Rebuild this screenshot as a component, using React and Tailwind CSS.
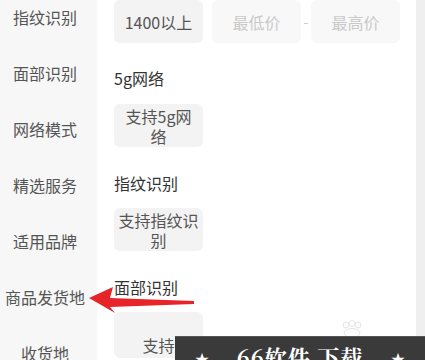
import React from 'react';

const sideItems = ['指纹识别', '面部识别', '网络模式', '精选服务', '适用品牌', '商品发货地', '收货地'];

const Chip = ({ children, className = '' }) => (
  <div
    className={`w-[89px] h-[43px] shrink-0 rounded-[6px] bg-[#f3f3f3] px-[4px] flex items-center justify-center text-center text-[16px] leading-[20px] text-[#555] ${className}`}
  >
    {children}
  </div>
);

const Heading = ({ children, className = '' }) => (
  <div className={`text-[16px] leading-[20px] text-[#333] ${className}`}>{children}</div>
);

const App = () => {
  return (
    <div className="relative w-[425px] h-[360px] overflow-hidden flex font-['Noto_Sans_CJK_SC',sans-serif] bg-white">
      {/* Sidebar */}
      <div className="w-[97px] shrink-0 bg-[#f7f7f7] pr-[7px]">
        <div className="-mt-[11px] flex flex-col">
          {sideItems.map((item) => (
            <div
              key={item}
              className="h-[56px] flex items-center justify-center text-[16px] text-[#555] whitespace-nowrap"
            >
              {item}
            </div>
          ))}
        </div>
      </div>

      {/* Content */}
      <div className="flex-1 bg-white pl-[17px]">
        <div className="flex items-center">
          <Chip>1400以上</Chip>
          <div className="ml-[9px] w-[89px] h-[43px] rounded-[6px] bg-[#f8f8f8] flex items-center justify-center text-[16px] text-[#c9c9c9]">
            最低价
          </div>
          <div className="w-[10px] text-center text-[14px] text-[#c9c9c9]">-</div>
          <div className="w-[89px] h-[43px] rounded-[6px] bg-[#f8f8f8] flex items-center justify-center text-[16px] text-[#c9c9c9]">
            最高价
          </div>
        </div>

        <Heading className="mt-[25px]">5g网络</Heading>
        <Chip className="mt-[16px]">支持5g网络</Chip>

        <Heading className="mt-[26px]">指纹识别</Heading>
        <Chip className="mt-[15px]">支持指纹识别</Chip>

        <Heading className="mt-[26px]">面部识别</Heading>
        <div className="mt-[15px] w-[89px] h-[46px] rounded-[6px] bg-[#f3f3f3] pt-[23px] text-center text-[16px] leading-[20px] text-[#555]">
          支持
        </div>
      </div>

      {/* Right strip */}
      <div className="w-[9px] shrink-0 bg-[#efefef]" />

      {/* Red arrow annotation */}
      <svg
        className="absolute left-0 top-0 pointer-events-none"
        width="425"
        height="360"
        viewBox="0 0 425 360"
      >
        <polygon
          points="89,298 113,287 110,298 194,301 194,304 110,307 115,313"
          fill="#e8242b"
        />
      </svg>

      {/* faint paw mark */}
      <svg
        className="absolute left-[338px] top-[320px] pointer-events-none"
        width="26"
        height="18"
        viewBox="0 0 26 18"
      >
        <g fill="none" stroke="#e6e6e6" strokeWidth="1">
          <circle cx="8" cy="5" r="3" />
          <circle cx="14" cy="3.5" r="3" />
          <circle cx="20" cy="5" r="3" />
          <ellipse cx="14" cy="13" rx="8" ry="4.5" />
        </g>
      </svg>

      {/* Watermark banner */}
      <div className="absolute left-[175px] right-0 top-[336px] bottom-0 border-t border-[#555] flex flex-col">
        <div className="h-[2px] bg-[#e3e3e3]" />
        <div className="flex-1 bg-[#3a3a3a] flex items-start justify-between px-[20px] pt-[8px]">
          <span className="text-white text-[14px] leading-[18px] mt-[4px]">★</span>
          <span className="text-white font-bold text-[22px] leading-[24px] tracking-[1px] font-['Noto_Serif_CJK_SC','Noto_Sans_CJK_SC',serif]">
            66软件 下载
          </span>
          <span className="text-white text-[14px] leading-[18px] mt-[4px]">★</span>
        </div>
      </div>
    </div>
  );
};

export default App;
